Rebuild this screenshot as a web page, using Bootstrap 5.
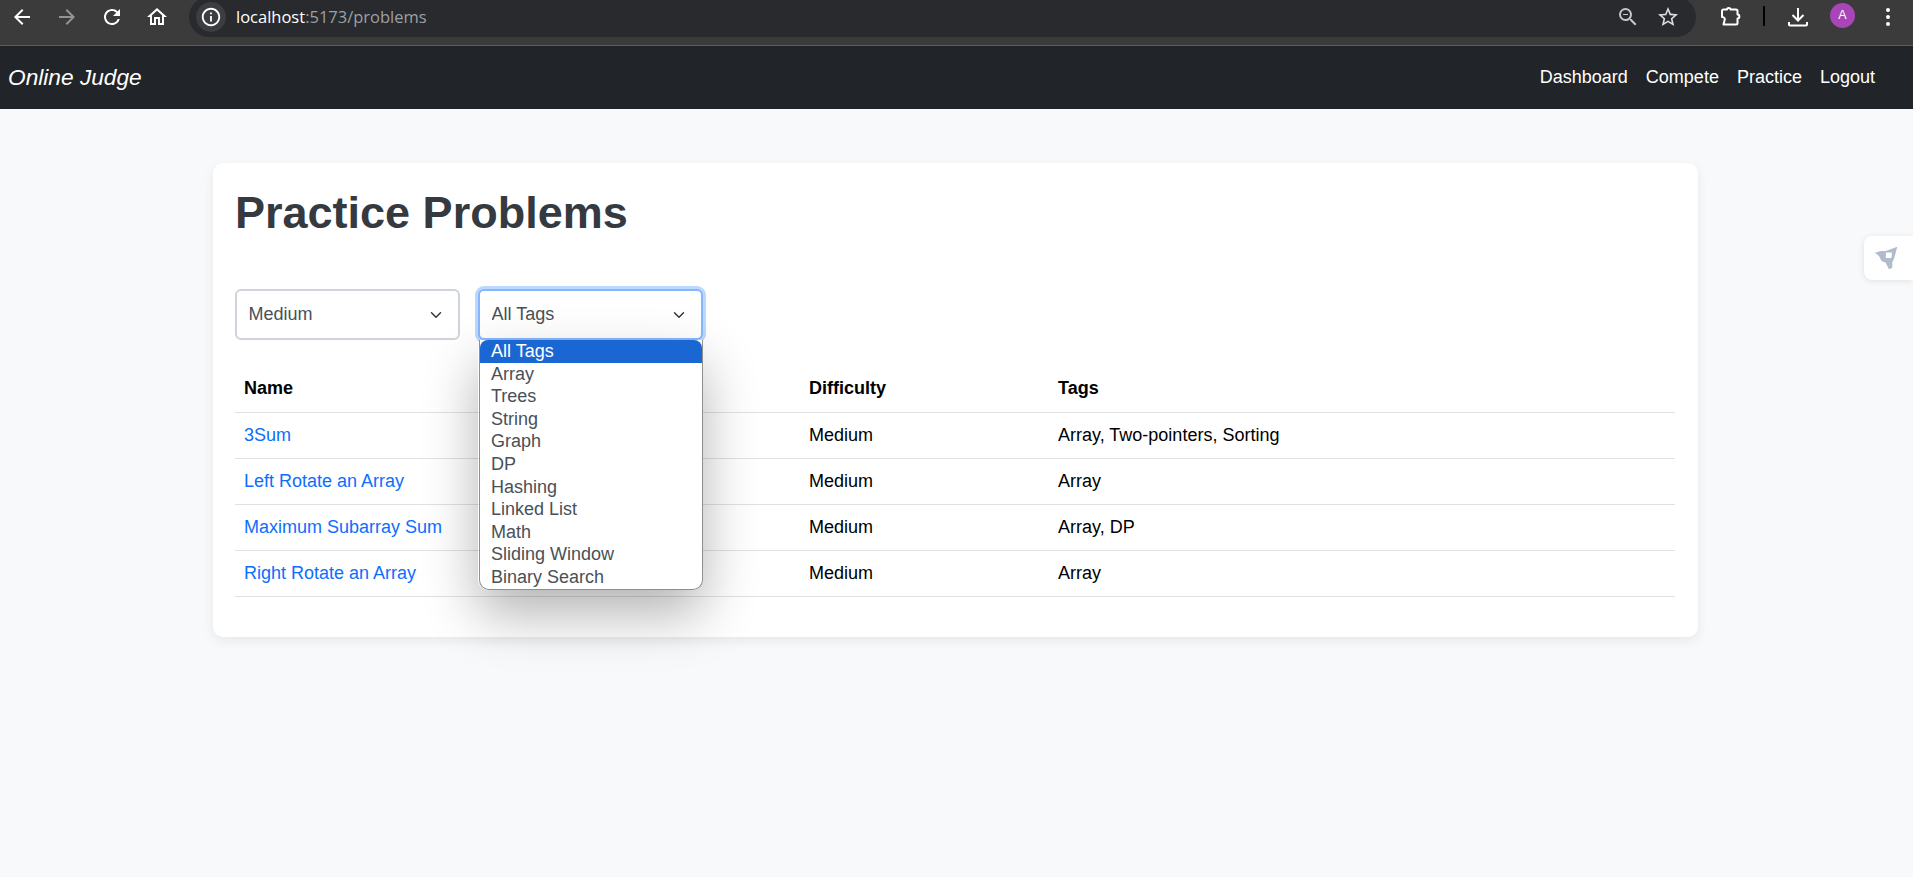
<!DOCTYPE html>
<html lang="en">
<head>
  <meta charset="UTF-8">
  <meta name="viewport" content="width=device-width, initial-scale=1">
  <title>Practice Problems</title>
  <link href="https://cdn.jsdelivr.net/npm/bootstrap@5.3.0/dist/css/bootstrap.min.css" rel="stylesheet">
  <style>
    html, body { height: 100%; }
    body { background: #f8f9fa; font-family: "Liberation Sans", Arial, sans-serif; font-size: 18px; overflow: hidden; }

    /* browser toolbar */
    .chrome-bar { height: 46px; background: #3b3b3b; border-bottom: 1px solid #5c5c5c; overflow: hidden; padding-left: 10px; gap: 21px; }
    .chrome-btn { width: 24px; height: 24px; fill: #fff; flex: none; margin-top: 5px; }
    .chrome-dim { opacity: .45; }
    .url-pill { width: 1507px; height: 40px; margin-top: -3px; background: #282a2d; border-radius: 20px; padding: 0 16px 0 7px; margin-right: 1px; margin-left: -1px; }
    .url-info { width: 30px; height: 30px; border-radius: 50%; background: #3c3d40; }
    .url-text { font-family: "Open Sans", sans-serif; font-size: 16.5px; margin-left: 10px; color: #9aa0a6; }
    .url-text b { font-weight: 400; color: #fff; }
    .chrome-sep { width: 2px; height: 20px; background: #000; margin-top: 6px; }
    .avatar-dot { width: 25px; height: 25px; border-radius: 50%; background: #a846b8; color: #fff; font-size: 12.5px; margin: 3px 0 0 -1px; flex: none; }

    /* app navbar */
    .app-nav { height: 63px; background: #212529; padding: 0 8px; }
    .app-brand { font-size: 22.7px; font-style: italic; color: #fff; }
    .app-links { gap: 18px; margin-right: 30px; }
    .app-links a { color: #fff; text-decoration: none; }

    /* card */
    .problem-panel { width: 1485px; height: 474px; margin: 54px 0 0 213px; padding: 23px 23px 0 22px; background: #fff; border-radius: 10px; box-shadow: 0 4px 12px rgba(0, 0, 0, .07); }
    .panel-title { font-size: 45px; font-weight: 700; color: #343a40; line-height: 1.2; margin: 0 0 49px; }
    .filter-row { gap: 18px; margin-bottom: 26px; }
    .filter-wrap { width: 225px; position: relative; }
    .filter-select { height: 51px; border: 2px solid #ced4da; border-radius: 6px; font-size: 18px; color: #495057; padding: 0 11.5px; background-position: right 14px center; background-size: 16px 12px; }
    .filter-open { border-color: #86b7fe; box-shadow: 0 0 0 3px #bcd8fe; }

    /* open select list */
    .tag-list { position: absolute; top: 51px; left: 1px; right: 0; z-index: 5; padding: 0; margin: 0; list-style: none; background: #fff; border: 1px solid #8f8f8f; border-top: 0; border-radius: 0 0 10px 10px; overflow: hidden; color: #495057; line-height: 22.6px; height: 250px; }
    .tag-shadow { position: absolute; top: 51px; left: 0; right: 0; height: 250px; z-index: 4; border-radius: 10px; box-shadow: 0 24px 54px rgba(0, 0, 0, .3); }
    .tag-list li { padding: 0 11px; }
    .tag-list li.tag-active { background: #1a66d2; color: #fff; border-radius: 8px 8px 0 0; }

    .problem-table { width: 100%; border-collapse: collapse; color: #000; table-layout: fixed; }
    .problem-table th, .problem-table td { padding: 0 9px; height: 46px; border-bottom: 1px solid #dee2e6; }
    .problem-table a { color: #0d6efd; text-decoration: none; }
    .col-name { width: 565px; }
    .col-diff { width: 249px; }

    /* floating widget on the right edge */
    .side-widget { position: absolute; top: 236px; right: 0; width: 49px; height: 44px; padding-right: 4px; background: #fff; border-radius: 8px 0 0 8px; box-shadow: 0 1px 6px rgba(0, 0, 0, .1); }
  </style>
</head>
<body>
  <!-- Browser toolbar -->
  <div class="chrome-bar d-flex align-items-start">
    <svg class="chrome-btn" viewBox="0 0 24 24"><path d="M20 11H7.83l5.59-5.59L12 4l-8 8 8 8 1.41-1.41L7.83 13H20v-2z"/></svg>
    <svg class="chrome-btn chrome-dim" viewBox="0 0 24 24"><path d="M12 4l-1.41 1.41L16.17 11H4v2h12.17l-5.58 5.59L12 20l8-8z"/></svg>
    <svg class="chrome-btn" viewBox="0 0 24 24"><path d="M17.65 6.35A7.958 7.958 0 0 0 12 4c-4.42 0-7.99 3.58-7.99 8s3.57 8 7.99 8c3.73 0 6.84-2.55 7.73-6h-2.08A5.99 5.99 0 0 1 12 18c-3.31 0-6-2.69-6-6s2.69-6 6-6c1.66 0 3.14.69 4.22 1.78L13 11h7V4l-2.35 2.35z"/></svg>
    <svg class="chrome-btn" viewBox="0 0 24 24"><path d="M12 5.69l5 4.5V18h-2v-6H9v6H7v-7.81l5-4.5M12 3L2 12h3v8h6v-6h2v6h6v-8h3L12 3z"/></svg>
    <div class="url-pill d-flex align-items-center">
      <div class="url-info d-flex align-items-center justify-content-center">
        <svg width="22" height="22" fill="#fff" viewBox="0 0 24 24"><path d="M11 7h2v2h-2zm0 4h2v6h-2zm1-9C6.48 2 2 6.48 2 12s4.48 10 10 10 10-4.48 10-10S17.52 2 12 2zm0 18c-4.41 0-8-3.59-8-8s3.59-8 8-8 8 3.59 8 8-3.59 8-8 8z"/></svg>
      </div>
      <span class="url-text"><b>localhost</b>:5173/problems</span>
      <svg class="ms-auto" width="24" height="24" fill="#c4c7c5" viewBox="0 0 24 24"><path d="M15.5 14h-.79l-.28-.27A6.471 6.471 0 0 0 16 9.5 6.5 6.5 0 1 0 9.5 16c1.61 0 3.09-.59 4.23-1.57l.27.28v.79l5 4.99L20.49 19l-4.99-5zm-6 0C7.01 14 5 11.99 5 9.5S7.01 5 9.5 5 14 7.01 14 9.5 11.99 14 9.5 14zM7 9h5v1H7z"/></svg>
      <svg class="ms-3" width="24" height="24" fill="#dcdcdc" viewBox="0 0 24 24"><path d="M22 9.24l-7.19-.62L12 2 9.19 8.63 2 9.24l5.46 4.73L5.82 21 12 17.27 18.18 21l-1.63-7.03L22 9.24zM12 15.4l-3.76 2.27 1-4.28-3.32-2.88 4.38-.38L12 6.1l1.71 4.04 4.38.38-3.32 2.88 1 4.28L12 15.4z"/></svg>
    </div>
    <svg class="chrome-btn" viewBox="0 0 24 24"><path fill="none" stroke="#fff" stroke-width="2" stroke-linejoin="round" d="M9 4.5c0-2 3.5-2 3.500 0H18a1.5 1.5 0 0 1 1.500 1.500v3.500c2.500 0 2.500 4 0 4V18a1.500 1.500 0 0 1-1.500 1.500H5.500l1-4c1-1.500 0-3.500-2.500-3.500V6A1.500 1.500 0 0 1 5.500 4.500z"/></svg>
    <div class="chrome-sep"></div>
    <svg class="chrome-btn" viewBox="0 0 24 24"><path fill="none" stroke="#fff" stroke-width="2" d="M12 3v12M6.500 10l5.500 5.500 5.500-5.500M3 17v2.500a1 1 0 0 0 1 1h16a1 1 0 0 0 1-1V17"/></svg>
    <div class="avatar-dot d-flex align-items-center justify-content-center">A</div>
    <svg class="chrome-btn" viewBox="0 0 24 24"><circle cx="12" cy="5" r="2"/><circle cx="12" cy="12" r="2"/><circle cx="12" cy="19" r="2"/></svg>
  </div>

  <!-- App navbar -->
  <nav class="app-nav d-flex align-items-center justify-content-between">
    <span class="app-brand">Online Judge</span>
    <div class="app-links d-flex">
      <a href="#">Dashboard</a>
      <a href="#">Compete</a>
      <a href="#">Practice</a>
      <a href="#">Logout</a>
    </div>
  </nav>

  <!-- Practice problems card -->
  <div class="problem-panel">
    <h1 class="panel-title">Practice Problems</h1>
    <div class="filter-row d-flex">
      <div class="filter-wrap">
        <select class="form-select filter-select">
          <option>Medium</option>
        </select>
      </div>
      <div class="filter-wrap">
        <select class="form-select filter-select filter-open">
          <option>All Tags</option>
        </select>
        <div class="tag-shadow"></div>
        <ul class="tag-list">
          <li class="tag-active">All Tags</li>
          <li>Array</li>
          <li>Trees</li>
          <li>String</li>
          <li>Graph</li>
          <li>DP</li>
          <li>Hashing</li>
          <li>Linked List</li>
          <li>Math</li>
          <li>Sliding Window</li>
          <li>Binary Search</li>
        </ul>
      </div>
    </div>
    <table class="problem-table">
      <thead>
        <tr>
          <th class="col-name">Name</th>
          <th class="col-diff">Difficulty</th>
          <th>Tags</th>
        </tr>
      </thead>
      <tbody>
        <tr><td><a href="#">3Sum</a></td><td>Medium</td><td>Array, Two-pointers, Sorting</td></tr>
        <tr><td><a href="#">Left Rotate an Array</a></td><td>Medium</td><td>Array</td></tr>
        <tr><td><a href="#">Maximum Subarray Sum</a></td><td>Medium</td><td>Array, DP</td></tr>
        <tr><td><a href="#">Right Rotate an Array</a></td><td>Medium</td><td>Array</td></tr>
      </tbody>
    </table>
  </div>

  <!-- Floating widget -->
  <div class="side-widget d-flex align-items-center justify-content-center">
    <svg width="23" height="24" fill="#b0bccb" fill-rule="evenodd" viewBox="0 0 23 24"><path d="M22.300 .7L19 13l-1.700 3v5.700L14 23.300l-3.300-6.600-4.200-1.700L4 10 0 6.700 5.700 5h5zM11 6.500l-.2 5.500h5.600L17 6.500z"/></svg>
  </div>
  <script src="https://cdn.jsdelivr.net/npm/bootstrap@5.3.0/dist/js/bootstrap.bundle.min.js"></script>
</body>
</html>
